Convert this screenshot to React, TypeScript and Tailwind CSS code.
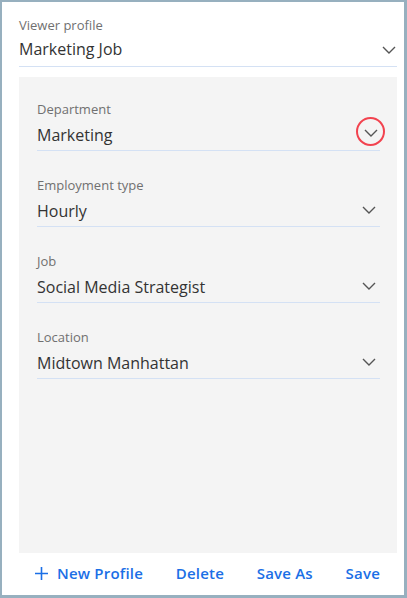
import { ReactNode } from 'react';

const Chevron = () => (
  <svg width="14" height="8" viewBox="0 0 14 8" fill="none">
    <polyline points="1,1 7,7 13,1" stroke="#555" strokeWidth="1.4" />
  </svg>
);

type FieldProps = {
  label: string;
  value: string;
  icon?: ReactNode;
};

const Field = ({ label, value, icon }: FieldProps) => (
  <div className="border-b border-[#d4e1f4] pb-[4px]">
    <div className="text-[13px] leading-[18px] text-[#707070]">{label}</div>
    <div className="mt-[6px] flex items-center justify-between">
      <span className="text-[16px] leading-[22px] text-[#333]">{value}</span>
      {icon ?? (
        <span className="mr-[4px] -mt-[3px] flex w-[14px] justify-center">
          <Chevron />
        </span>
      )}
    </div>
  </div>
);

const fields = [
  { label: 'Department', value: 'Marketing', highlight: true },
  { label: 'Employment type', value: 'Hourly' },
  { label: 'Job', value: 'Social Media Strategist' },
  { label: 'Location', value: 'Midtown Manhattan' },
];

export default function App() {
  return (
    <div
      className="flex h-[598px] w-[407px] flex-col border-[#97b0bf] border-t-2 border-l-2 border-r-[3px] border-b-[3px] bg-white pl-[17px] pr-[7px] pt-[14px]"
      style={{ fontFamily: '"Open Sans", sans-serif' }}
    >
      <div className="border-b border-[#d4e1f4] pb-[6px]">
        <div className="text-[13px] leading-[18px] text-[#707070]">Viewer profile</div>
        <div className="mt-[4px] flex items-center justify-between">
          <span className="text-[16px] leading-[22px] text-[#333]">Marketing Job</span>
          <span className="mr-[1px] mt-[2px] flex">
            <Chevron />
          </span>
        </div>
      </div>

      <div className="mt-[10px] flex flex-1 flex-col gap-[25px] bg-[#f4f4f4] pl-[18px] pr-[17px] pt-[23px]">
        {fields.map((f) =>
          f.highlight ? (
            <Field
              key={f.label}
              label={f.label}
              value={f.value}
              icon={
                <span className="-mr-[5px] -mt-[7px] flex h-[29px] w-[29px] items-center justify-center rounded-full border-2 border-[#f2434f]">
                  <span className="mt-[2px] flex">
                    <Chevron />
                  </span>
                </span>
              }
            />
          ) : (
            <Field key={f.label} label={f.label} value={f.value} />
          )
        )}
      </div>

      <div className="flex h-[42px] items-center justify-between pb-[1px] pl-[16px] pr-[17px] text-[15px] font-semibold tracking-[0.2px] text-[#1b6fe6]">
        <button className="flex items-center gap-[9px]">
          <svg width="13" height="13" viewBox="0 0 13 13">
            <path d="M6.5 0v13M0 6.5h13" stroke="#1b6fe6" strokeWidth="1.6" />
          </svg>
          New Profile
        </button>
        <button>Delete</button>
        <button>Save As</button>
        <button>Save</button>
      </div>
    </div>
  );
}
